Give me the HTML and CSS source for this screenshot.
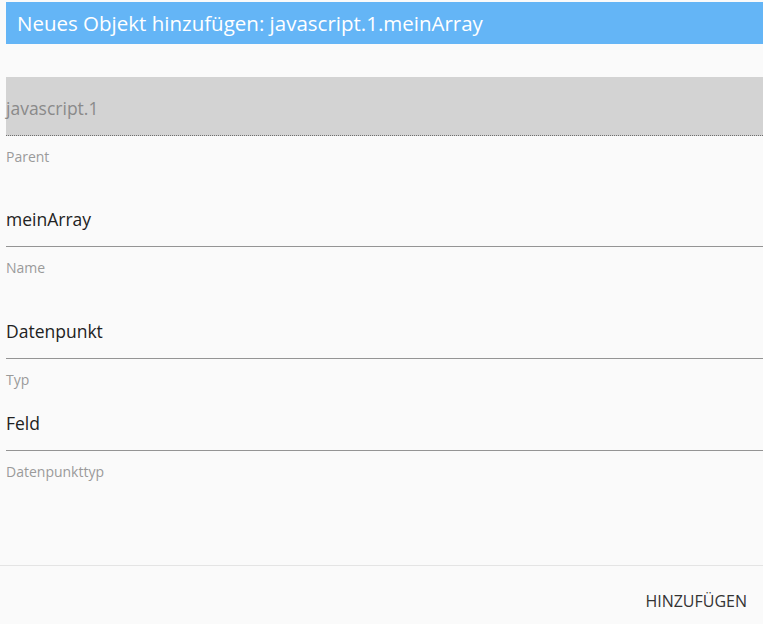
FILE: index.html
```html
<!DOCTYPE html>
<html lang="de">
<head>
<meta charset="utf-8">
<title>Neues Objekt hinzufügen</title>
<link rel="stylesheet" href="styles.css">
</head>
<body>
<div class="dialog">
  <div class="content">
    <h1 class="title">Neues Objekt hinzufügen: javascript.1.meinArray</h1>
    <div class="field f1">
      <div class="input disabled">javascript.1</div>
      <div class="helper">Parent</div>
    </div>
    <div class="field f2">
      <div class="input">meinArray</div>
      <div class="helper">Name</div>
    </div>
    <div class="field f3">
      <div class="input">Datenpunkt</div>
      <div class="helper">Typ</div>
    </div>
    <div class="field f4">
      <div class="input">Feld</div>
      <div class="helper">Datenpunkttyp</div>
    </div>
  </div>
  <div class="actions">
    <button class="btn">HINZUFÜGEN</button>
  </div>
</div>
</body>
</html>
```
FILE: styles.css
```css
html, body {
  margin: 0;
  padding: 0;
  background: #fafafa;
  font-family: "Open Sans", "Noto Sans", sans-serif;
}
.dialog {
  width: 763px;
  height: 624px;
  display: flex;
  flex-direction: column;
}
.content {
  padding: 2px 0 0 6px;
  height: 565px;
  box-sizing: border-box;
}
.title {
  margin: 0;
  height: 42px;
  background: #64b5f6;
  color: #fff;
  font-weight: 400;
  font-size: 20.5px;
  line-height: 42px;
  padding-left: 11px;
}
.field .input {
  height: 59px;
  box-sizing: border-box;
  padding-bottom: 15px;
  display: flex;
  align-items: flex-end;
  font-size: 17.5px;
  line-height: 24px;
  color: #222;
  border-bottom: 1px solid #949494;
}
.field .input.disabled {
  background: #d3d3d3;
  color: #8a8a8a;
  border-bottom: 1px dotted #6e6e6e;
}
.helper {
  margin-top: 12px;
  font-size: 14px;
  line-height: 18px;
  color: #9a9a9a;
}
.f1 { margin-top: 33px; }
.f2 { margin-top: 22px; }
.f3 { margin-top: 23px; }
.f4 { margin-top: 3px; }
.actions {
  border-top: 1px solid #e4e4e4;
  flex: 1;
  display: flex;
  justify-content: flex-end;
  align-items: center;
  padding-right: 16px;
}
.btn {
  background: none;
  border: 0;
  padding: 0;
  font-family: inherit;
  font-size: 16px;
  color: #333;
  margin-top: 12px;
}
```
